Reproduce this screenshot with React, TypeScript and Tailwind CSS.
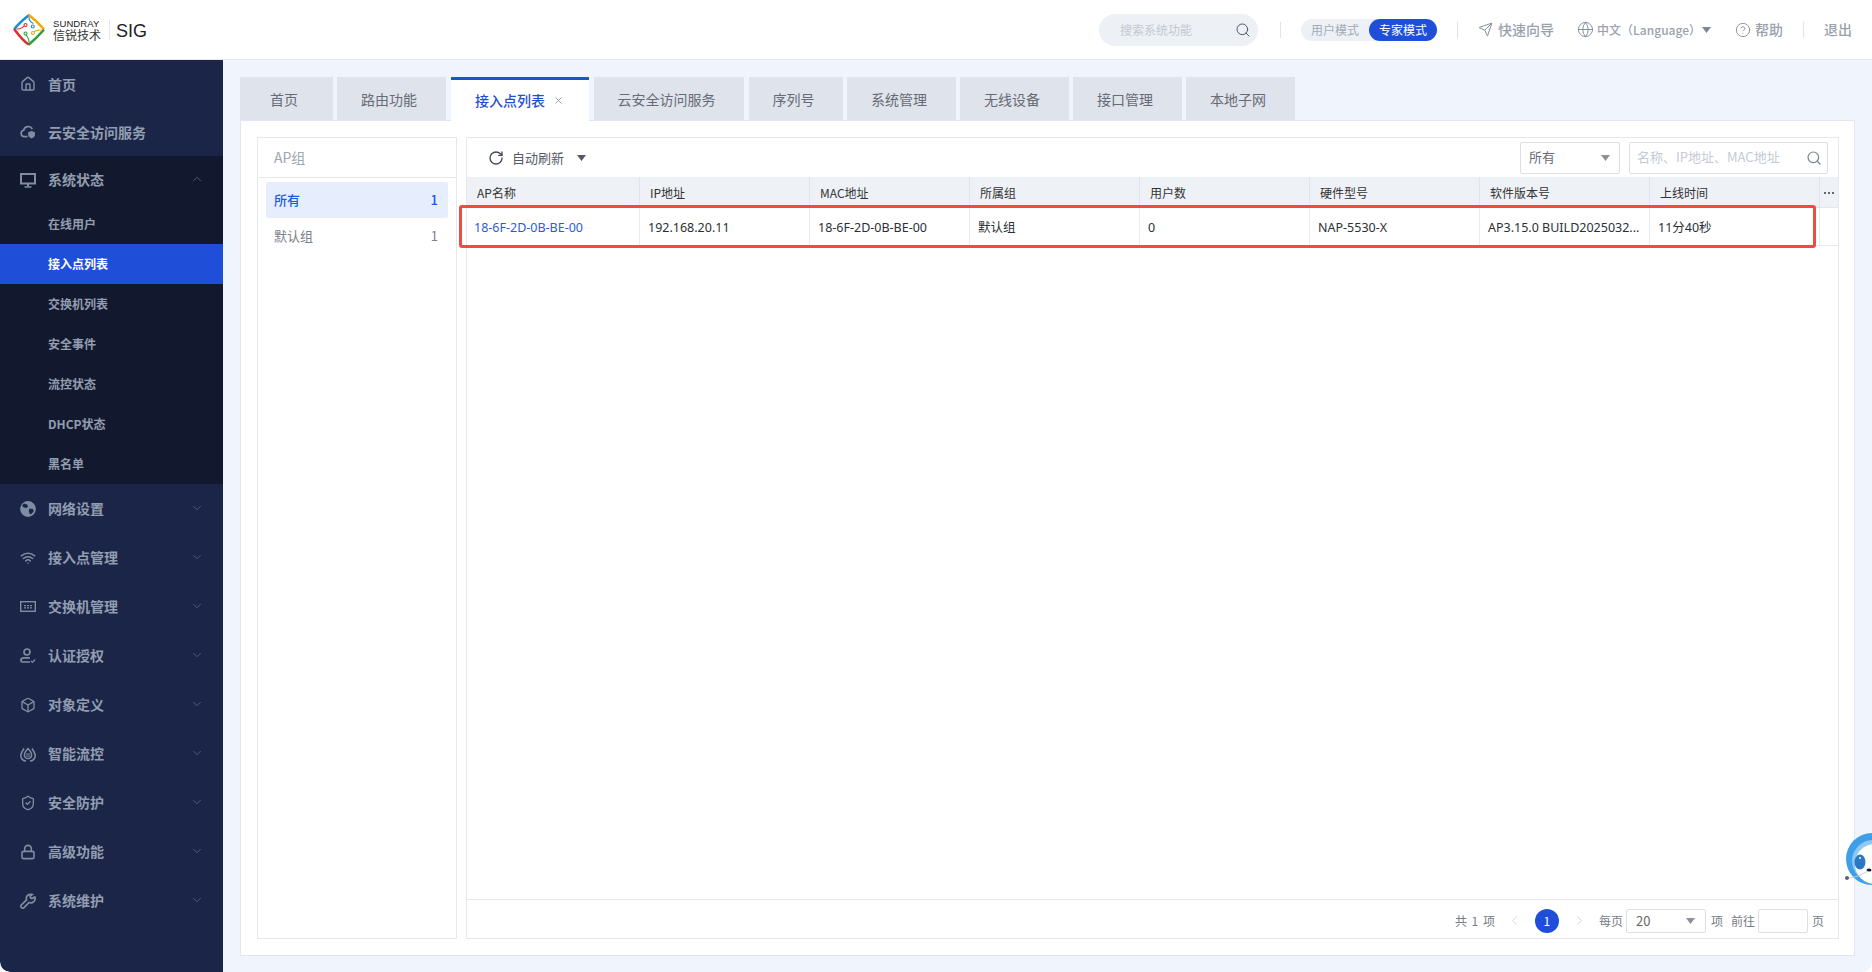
import React from "react";
import { ChevronDown, ChevronUp, ChevronLeft, ChevronRight, Home, Search, Send, Globe, CircleHelp, RotateCw, Wifi, Box, ShieldCheck, Lock, X } from "lucide-react";

const FONT = "font-['Noto_Sans_CJK_SC','Noto_Sans',sans-serif]";

function Caret({ className = "" }: { className?: string }) {
  return (
    <svg width="9" height="6" viewBox="0 0 9 6" className={className}>
      <path d="M0 0h9L4.500 6z" fill="currentColor" />
    </svg>
  );
}

const CloudShield = () => (
  <svg width="17" height="16" viewBox="0 0 17 16" fill="none" stroke="currentColor" strokeWidth="1.800">
    <path d="M8 13H4.500a3.500 3.500 0 0 1-.6-6.900A4.800 4.800 0 0 1 13 5" />
    <path d="M12.300 7l3.600 1.200v2.600c0 2-1.600 3.200-3.600 4-2-.8-3.600-2-3.600-4V8.200z" fill="currentColor" stroke="none" />
  </svg>
);
const MonitorIcon = () => (
  <svg width="16" height="15" viewBox="0 0 16 15" fill="none" stroke="currentColor">
    <rect x="1" y="1" width="14" height="9.500" strokeWidth="2" />
    <path d="M8 11v2.500" strokeWidth="2" />
    <path d="M4.500 14h7" strokeWidth="1.600" />
  </svg>
);
const GlobeFill = () => (
  <svg width="16" height="16" viewBox="0 0 16 16">
    <circle cx="8" cy="8" r="7.900" fill="currentColor" />
    <path d="M4 2.600l3 .8 1.200 2-1.800 1.500-2.600-.5L2 4.800zM9.500 7.500l3.500.5.800 2.200-2.800 3-1.500-.4-.7-3z" fill="#1a2547" />
  </svg>
);
const SwitchIcon = () => (
  <svg width="16" height="11" viewBox="0 0 16 11" fill="none">
    <rect x=".7" y=".7" width="14.600" height="9.600" stroke="currentColor" strokeWidth="1.400" />
    <path d="M4 4h2v1.300H4zM7 4h2v1.300H7zM10 4h2v1.300h-2zM4 6.200h2v1.300H4zM7 6.200h2v1.300H7zM10 6.200h2v1.300h-2z" fill="currentColor" />
  </svg>
);
const UserCheck = () => (
  <svg width="16" height="16" viewBox="0 0 16 16" fill="none" stroke="currentColor" strokeWidth="1.700">
    <circle cx="7" cy="4" r="3" />
    <path d="M10 14H2.300a1.400 1.400 0 0 1-1.400-1.400c0-1.500 1.300-2.700 3-2.700h6" />
    <path d="M11 13l1.500 1.400L15 11.500" strokeWidth="1.200" />
  </svg>
);
const Drops = () => (
  <svg width="16" height="16" viewBox="0 0 16 16" fill="none" stroke="currentColor" strokeWidth="1.500">
    <path d="M8 2.500c2.200 2.400 3.600 4.400 3.600 6.500a3.600 3.600 0 0 1-7.200 0c0-2.100 1.400-4.100 3.600-6.500z" />
    <path d="M4 2.500C2.300 5 .8 7.500 .8 9.500 .8 12.500 3 15 6 15M12 2.500c1.700 2.500 3.200 5 3.200 7 0 3-2.200 5.500-5.200 5.500" />
    <path d="M7 7v4M9 7v4" strokeWidth="1" />
  </svg>
);
const Wrench = () => (
  <svg width="16" height="16" viewBox="0 0 16 16" fill="none" stroke="currentColor" strokeWidth="1.700">
    <path d="M10.500 1.200a4.300 4.300 0 0 0-4 5.700L1.300 12a1.700 1.700 0 0 0 0 2.300l.4.400a1.700 1.700 0 0 0 2.300 0l5.100-5.200a4.300 4.300 0 0 0 5.700-5.500L12 5.500 10.500 4.800l-.3-1.600 2.100-1.700a4 4 0 0 0-1.800-.3z" />
  </svg>
);

const Logo = () => (
  <svg width="32" height="32" viewBox="0 0 32 32" fill="none" strokeWidth="2.600" strokeLinecap="round">
    <path d="M15.500 1.500C11 5 6.500 8.500 1.800 14.500" stroke="#1a8fd6" />
    <path d="M16.500 1.500c4 3 9 7.500 13.700 13" stroke="#f5a800" />
    <path d="M30.200 16.500c-4.500 5-9 9.500-13.700 13.500" stroke="#2aa13c" />
    <path d="M15 30C10.500 27 6 21.500 1.800 16" stroke="#d9322e" />
    <path d="M16 3.500c0 2 1.500 4.500 4 5.800" stroke="#1a8fd6" strokeWidth="1.200" />
    <path d="M4 15c3 0 6-1 8.500-4.500" stroke="#d9322e" strokeWidth="1.200" />
    <path d="M28 16c-3 0-6 .5-8.500 3" stroke="#f5a800" strokeWidth="1.200" />
    <path d="M16 28c0-2-1.500-6-4-8" stroke="#2aa13c" strokeWidth="1.200" />
    <circle cx="19.800" cy="12.500" r="1.500" fill="#fff" stroke="#1a8fd6" strokeWidth="1.100" />
    <circle cx="12.500" cy="11" r="1.500" fill="#fff" stroke="#d9322e" strokeWidth="1.100" />
    <circle cx="20" cy="19" r="1.500" fill="#fff" stroke="#f5a800" strokeWidth="1.100" />
    <circle cx="12.500" cy="19.500" r="1.500" fill="#fff" stroke="#2aa13c" strokeWidth="1.100" />
  </svg>
);

const Mascot = () => (
  <svg width="30" height="52" viewBox="0 0 30 52" className="block">
    <circle cx="30" cy="26" r="26" fill="#3f9ee8" />
    <circle cx="31" cy="28" r="21" fill="#8cc9f5" />
    <circle cx="33" cy="31" r="20" fill="#ffffff" />
    <ellipse cx="18" cy="29" rx="5.500" ry="7.500" fill="#2a78c4" />
    <circle cx="18" cy="25" r="1" fill="#ffffff" />
    <ellipse cx="27" cy="37" rx="2.500" ry="1.500" fill="#111827" />
    <path d="M5 45c8 0 14-3 21-7" stroke="#c9ced6" strokeWidth="1" fill="none" />
    <circle cx="5" cy="45" r="2" fill="#5b6470" />
  </svg>
);

function MainItem({ icon, label, open }: { icon: React.ReactNode; label: string; open?: boolean }) {
  return (
    <div className={`flex items-center pl-[20px] pr-[19px] font-semibold text-[14px] text-[#929db0] ${open ? "h-[48px]" : "h-[49px]"}`}>
      <span className="w-[16px] h-[16px] flex items-center justify-center text-[#7f8da3] shrink-0">{icon}</span>
      <span className={`ml-[12px] flex-1 ${open ? "pb-[2px]" : ""}`}>{label}</span>
      {open === true ? <ChevronUp size={14} strokeWidth={1.200} className="text-[#687488] mb-[2px]" /> : open === false ? <ChevronDown size={14} strokeWidth={1.200} className="text-[#687488] mb-[2px]" /> : null}
    </div>
  );
}

function Sidebar() {
  const subs = ["在线用户", "接入点列表", "交换机列表", "安全事件", "流控状态", "DHCP状态", "黑名单"];
  const rest: [React.ReactNode, string][] = [
    [<GlobeFill />, "网络设置"],
    [<Wifi size={16} strokeWidth={2.200} />, "接入点管理"],
    [<SwitchIcon />, "交换机管理"],
    [<UserCheck />, "认证授权"],
    [<Box size={16} strokeWidth={2} />, "对象定义"],
    [<Drops />, "智能流控"],
    [<ShieldCheck size={16} strokeWidth={2} />, "安全防护"],
    [<Lock size={16} strokeWidth={2.400} />, "高级功能"],
    [<Wrench />, "系统维护"],
  ];
  return (
    <aside className="w-[223px] shrink-0 bg-[#1a2547] rounded-bl-[10px]">
      <div className="h-[48px] flex items-center pl-[20px] font-semibold text-[14px] text-[#929db0]">
        <span className="w-[16px] h-[16px] flex items-center justify-center text-[#7f8da3]"><Home size={16} strokeWidth={2.200} /></span>
        <span className="ml-[12px]">首页</span>
      </div>
      <div className="h-[48px] flex items-center pl-[20px] font-semibold text-[14px] text-[#929db0]">
        <span className="w-[16px] h-[16px] flex items-center justify-center text-[#7f8da3]"><CloudShield /></span>
        <span className="ml-[12px]">云安全访问服务</span>
      </div>
      <div className="bg-[#12192e]">
        <MainItem icon={<MonitorIcon />} label="系统状态" open />
        {subs.map((s) => (
          <div
            key={s}
            className={`h-[40px] flex items-center pl-[48px] text-[12px] font-semibold ${s === "接入点列表" ? "bg-[#1f4fd8] text-white" : "text-[#929db0]"}`}
          >
            {s}
          </div>
        ))}
      </div>
      {rest.map(([ic, l]) => (
        <MainItem key={l} icon={ic} label={l} open={false} />
      ))}
    </aside>
  );
}

function Header() {
  return (
    <header className="h-[60px] shrink-0 bg-white border-b border-[#e6e8ee] flex items-center pl-[13px] pr-[20px] text-[#9aa1ad]">
      <Logo />
      <div className="ml-[8px] w-[48px] flex flex-col items-start leading-none">
        <span className="font-['Liberation_Sans',sans-serif] text-[9.500px] text-[#222] tracking-[0.1px] leading-[11px]">SUNDRAY</span>
        <span className="text-[12px] text-[#333] leading-[12px] whitespace-nowrap">信锐技术</span>
      </div>
      <span className="ml-[8px] h-[20px] w-px bg-[#e2e4e8]" />
      <span className="ml-[6px] pt-[4px] font-['Liberation_Sans',sans-serif] text-[18px] text-[#222]">SIG</span>
      <div className="ml-auto w-[159px] h-[32px] rounded-full bg-[#edf0f5] flex items-center pl-[21px] pr-[7px]">
        <span className="text-[12px] text-[#c3c8d0] flex-1">搜索系统功能</span>
        <Search size={16} strokeWidth={1.400} className="text-[#444b57]" />
      </div>
      <span className="ml-[22px] h-[16px] w-px bg-[#e0e3e8]" />
      <div className="ml-[20px] w-[136px] h-[22px] rounded-full bg-[#edf0f5] flex items-center text-[12px]">
        <span className="w-[68px] text-center text-[#a4abb6]">用户模式</span>
        <span className="w-[68px] h-[22px] rounded-full bg-[#1f4fd8] text-white flex items-center justify-center">专家模式</span>
      </div>
      <span className="ml-[20px] h-[16px] w-px bg-[#e0e3e8]" />
      <Send size={15} strokeWidth={1.500} className="ml-[20px] text-[#7e8796]" />
      <span className="ml-[5px] text-[14px] font-medium">快速向导</span>
      <Globe size={17} strokeWidth={1.300} className="ml-[23px] text-[#7e8796]" />
      <span className="ml-[3px] text-[12px] font-medium whitespace-nowrap">中文（Language）</span>
      <Caret className="ml-[1px] text-[#7e8796]" />
      <CircleHelp size={16} strokeWidth={1.300} className="ml-[24px] text-[#7e8796]" />
      <span className="ml-[4px] text-[14px] font-medium">帮助</span>
      <span className="ml-[20px] h-[16px] w-px bg-[#e0e3e8]" />
      <span className="ml-[20px] text-[14px] font-medium">退出</span>
    </header>
  );
}

function Tabs() {
  const tab = "h-[43px] bg-[#dfe3ec] flex items-center justify-center pr-[5px] pt-[2px] text-[14px] text-[#666b75]";
  return (
    <div className="flex items-end gap-[4px] h-[43px] shrink-0">
      <div className={`${tab} w-[93px]`}>首页</div>
      <div className={`${tab} w-[109px]`}>路由功能</div>
      <div className="h-[44px] -mb-px w-[138px] ml-px bg-white border-t-[3px] border-[#1f4fd8] flex items-center pl-[24px] relative z-10">
        <span className="text-[14px] font-medium text-[#1f4fd8]">接入点列表</span>
        <X size={11} strokeWidth={1.500} className="ml-[8px] text-[#7a808c]" />
      </div>
      <div className={`${tab} w-[150px] ml-px`}>云安全访问服务</div>
      <div className={`${tab} w-[94px] ml-px`}>序列号</div>
      <div className={`${tab} w-[109px]`}>系统管理</div>
      <div className={`${tab} w-[109px]`}>无线设备</div>
      <div className={`${tab} w-[109px]`}>接口管理</div>
      <div className={`${tab} w-[109px]`}>本地子网</div>
    </div>
  );
}

function GroupCard() {
  return (
    <div className="w-[200px] shrink-0 border border-[#e6e8ee] bg-white">
      <div className="h-[40px] border-b border-[#e6e8ee] flex items-center pl-[16px] text-[14px] text-[#a0a5ae]">AP组</div>
      <div className="px-[8px] pt-[4px]">
        <div className="h-[36px] bg-[#e6eefd] rounded-[2px] flex items-center justify-between pl-[8px] pr-[10px] text-[13px] font-medium text-[#1f5be0]">
          <span>所有</span><span>1</span>
        </div>
        <div className="h-[36px] flex items-center justify-between pl-[8px] pr-[10px] text-[13px] text-[#7b808a]">
          <span>默认组</span><span>1</span>
        </div>
      </div>
    </div>
  );
}

const COLS = [
  { head: "AP名称", cell: "18-6F-2D-0B-BE-00", w: "w-[173px]", link: true },
  { head: "IP地址", cell: "192.168.20.11", w: "w-[170px]" },
  { head: "MAC地址", cell: "18-6F-2D-0B-BE-00", w: "w-[160px]" },
  { head: "所属组", cell: "默认组", w: "w-[170px]" },
  { head: "用户数", cell: "0", w: "w-[170px]" },
  { head: "硬件型号", cell: "NAP-5530-X", w: "w-[170px]" },
  { head: "软件版本号", cell: "AP3.15.0 BUILD2025032...", w: "w-[170px]" },
  { head: "上线时间", cell: "11分40秒", w: "w-[170px]" },
];

function Table() {
  return (
    <div>
      <div className="flex h-[31px] bg-[#eef1f6] border-b border-[#e3e6ee]">
        {COLS.map((c) => (
          <div key={c.head} className={`${c.w} shrink-0 border-r border-[#e1e4ec] flex items-center pl-[10px] pt-[2px] text-[12px] text-[#333]`}>
            {c.head}
          </div>
        ))}
        <div className="flex-1 flex items-center justify-center gap-[2px] pt-[2px]">
          <span className="w-[2px] h-[2px] bg-[#666]" /><span className="w-[2px] h-[2px] bg-[#666]" /><span className="w-[2px] h-[2px] bg-[#666]" />
        </div>
      </div>
      <div className="flex h-[38px] border-b border-[#e8ebf1]">
        {COLS.map((c) => (
          <div
            key={c.head}
            className={`${c.w} shrink-0 border-r border-[#e8ebf1] flex items-center pt-[3px] text-[12.500px] whitespace-nowrap font-['Noto_Sans','Noto_Sans_CJK_SC',sans-serif] ${c.link ? "pl-[7px] text-[#2f5bd0]" : "pl-[8px] text-[#2c2f36]"}`}
          >
            {c.cell}
          </div>
        ))}
      </div>
    </div>
  );
}

function Pager() {
  return (
    <div className="h-[39px] border-t border-[#e6e8ee] flex items-center justify-end pt-[3px] pr-[14px] text-[12px] text-[#777c86] shrink-0">
      <span className="[word-spacing:2px]">共 1 项</span>
      <ChevronLeft size={15} strokeWidth={1.300} className="ml-[12px] text-[#c8ccd3]" />
      <span className="ml-[13px] w-[24px] h-[24px] rounded-full bg-[#1f4fd8] text-white flex items-center justify-center">1</span>
      <ChevronRight size={15} strokeWidth={1.300} className="ml-[13px] text-[#c8ccd3]" />
      <span className="ml-[12px]">每页</span>
      <div className="ml-[3px] w-[80px] h-[24px] border border-[#dcdfe6] rounded-[2px] flex items-center justify-between pl-[9px] pr-[10px] text-[13px] text-[#666]">
        <span>20</span><Caret className="text-[#8b909a]" />
      </div>
      <span className="ml-[5px]">项</span>
      <span className="ml-[8px]">前往</span>
      <div className="ml-[3px] w-[50px] h-[24px] border border-[#dcdfe6] rounded-[2px]" />
      <span className="ml-[4px]">页</span>
    </div>
  );
}

function ListCard() {
  return (
    <div className="relative flex-1 min-w-0 border border-[#e6e8ee] bg-white flex flex-col">
      <div className="h-[39px] flex items-center shrink-0">
        <RotateCw size={16} strokeWidth={2} className="ml-[21px] text-[#444b57]" />
        <span className="ml-[8px] text-[13px] text-[#555b66]">自动刷新</span>
        <Caret className="ml-[13px] text-[#555b66]" />
        <div className="ml-auto w-[100px] h-[32px] border border-[#dcdfe6] rounded-[2px] flex items-center justify-between pl-[8px] pr-[9px] text-[13px] text-[#666b75]">
          <span className="pb-[2px]">所有</span><Caret className="text-[#8b909a]" />
        </div>
        <div className="ml-[9px] mr-[10px] w-[199px] h-[32px] border border-[#dcdfe6] rounded-[2px] flex items-center justify-between pl-[7px] pr-[5px] text-[13px] text-[#c5cad5]">
          <span className="pb-[2px]">名称、IP地址、MAC地址</span>
          <Search size={16} strokeWidth={1.800} className="text-[#7a808c]" />
        </div>
      </div>
      <Table />
      <div className="flex-1" />
      <Pager />
      <div className="absolute left-[-8px] top-[67px] w-[1357px] h-[43px] border-[3px] border-[#ee4c40] rounded-[3px] pointer-events-none" />
    </div>
  );
}

export default function App() {
  return (
    <div className={`${FONT} relative w-[1872px] h-[972px] overflow-hidden bg-white`}>
      <div className="w-full h-full flex flex-col rounded-[10px] overflow-hidden bg-[#f0f4fc]">
        <Header />
        <div className="flex-1 min-h-0 flex">
          <Sidebar />
          <main className="flex-1 min-w-0 flex flex-col pl-[17px] pr-[17px] pt-[17px] pb-[16px]">
            <Tabs />
            <div className="flex-1 min-h-0 bg-white border border-[#e3e6ee] flex gap-[9px] pl-[16px] pr-[15px] pt-[16px] pb-[16px]">
              <GroupCard />
              <ListCard />
            </div>
          </main>
        </div>
      </div>
      <div className="absolute right-0 top-[833px]"><Mascot /></div>
    </div>
  );
}
